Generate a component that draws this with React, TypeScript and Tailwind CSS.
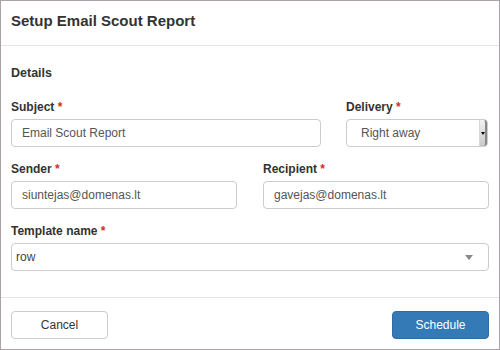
export default function App() {
  const font = { fontFamily: '"Liberation Sans", Arial, sans-serif' };

  return (
    <div
      style={font}
      className="flex h-[350px] w-[500px] flex-col border border-[#aaa2a7] bg-white text-[#333]"
    >
      <div className="h-[45px] border-b border-[#e5e5e5] px-[10px] pt-[9px]">
        <h4 className="text-[15px] font-bold leading-[22px]">Setup Email Scout Report</h4>
      </div>

      <div className="flex-1 px-[10px] pt-[18px]">
        <div className="text-[12.5px] font-bold leading-[18px]">Details</div>

        <div className="mt-[16px] grid grid-cols-[310px_1fr] gap-x-[25px]">
          <Field label="Subject">
            <input
              readOnly
              value="Email Scout Report"
              style={font}
              className="h-[28px] w-full rounded-[4px] border border-[#ccc] px-[10px] text-[12px] text-[#555] outline-none"
            />
          </Field>
          <Field label="Delivery">
            <div className="flex h-[28px] w-[142px] items-stretch rounded-[4px] border border-[#ccc] bg-white">
              <span className="flex flex-1 items-center pl-[14px] text-[12px] text-[#555]">Right away</span>
              <span className="flex w-[8px] items-center justify-center rounded-r-[3px] border-l border-[#d8d8d8] border-r-2 border-r-[#888] bg-gradient-to-b from-[#f2f2f2] to-[#c8c8c8]">
                <span className="h-0 w-0 border-x-[2px] border-t-[3px] border-x-transparent border-t-black" />
              </span>
            </div>
          </Field>
        </div>

        <div className="mt-[13px] grid grid-cols-2 gap-x-[26px]">
          <Field label="Sender">
            <input
              readOnly
              value="siuntejas@domenas.lt"
              style={font}
              className="h-[28px] w-full rounded-[4px] border border-[#ccc] px-[10px] text-[12px] text-[#555] outline-none"
            />
          </Field>
          <Field label="Recipient">
            <input
              readOnly
              value="gavejas@domenas.lt"
              style={font}
              className="h-[28px] w-full rounded-[4px] border border-[#ccc] px-[10px] text-[12px] text-[#555] outline-none"
            />
          </Field>
        </div>

        <div className="mt-[13px]">
          <Field label="Template name">
            <div className="flex h-[28px] w-full items-center justify-between rounded-[4px] border border-[#ccc] pl-[4px] pr-[15px]">
              <span className="text-[12px] text-[#444]">row</span>
              <span className="h-0 w-0 border-x-[4px] border-t-[5px] border-x-transparent border-t-[#888]" />
            </div>
          </Field>
        </div>
      </div>

      <div className="flex h-[52px] items-start justify-between border-t border-[#e5e5e5] px-[10px] pt-[13px]">
        <button className="h-[28px] w-[97px] rounded-[4px] border border-[#ccc] bg-white text-[12px] text-[#333]">
          Cancel
        </button>
        <button className="h-[28px] w-[97px] rounded-[4px] border border-[#2e6da4] bg-[#337ab7] text-[12px] text-white">
          Schedule
        </button>
      </div>
    </div>
  );
}

function Field({ label, children }: { label: string; children: React.ReactNode }) {
  return (
    <div>
      <label className="mb-[3px] block text-[12px] font-bold leading-[18px]">
        {label} <span className="text-[#c9302c]">*</span>
      </label>
      {children}
    </div>
  );
}
